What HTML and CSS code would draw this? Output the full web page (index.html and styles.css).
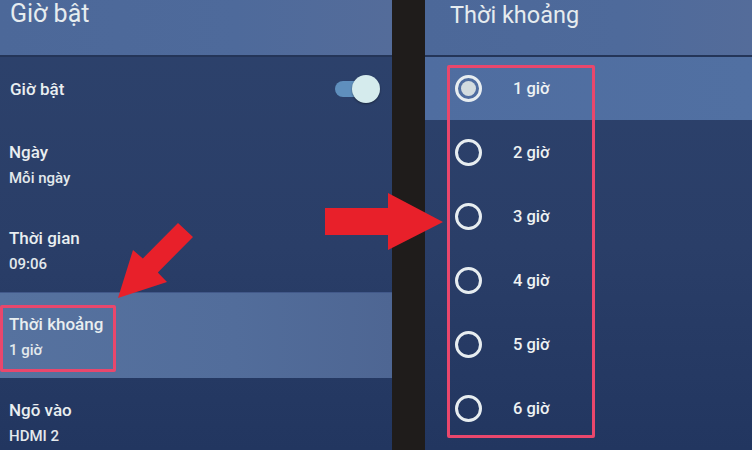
FILE: index.html
```html
<!DOCTYPE html>
<html lang="vi">
<head>
<meta charset="utf-8">
<title>Giờ bật</title>
<link rel="stylesheet" href="styles.css">
</head>
<body>
<div class="screen">
  <section class="panel panel-left">
    <header class="panel-head"><h1 class="title">Giờ bật</h1></header>
    <div class="toggle-row">
      <span class="label">Giờ bật</span>
      <span class="switch"><span class="track"></span><span class="thumb"></span></span>
    </div>
    <div class="item"><span class="label">Ngày</span><span class="sub">Mỗi ngày</span></div>
    <div class="item"><span class="label">Thời gian</span><span class="sub">09:06</span></div>
    <div class="item item-active">
      <span class="label">Thời khoảng</span><span class="sub">1 giờ</span>
      <span class="mark mark-left"></span>
    </div>
    <div class="item"><span class="label">Ngõ vào</span><span class="sub">HDMI 2</span></div>
  </section>
  <div class="divider"></div>
  <section class="panel panel-right">
    <header class="panel-head"><h1 class="title title-right">Thời khoảng</h1></header>
    <ul class="options">
      <li class="option option-selected"><span class="radio"></span><span class="opt-text">1 giờ</span></li>
      <li class="option"><span class="radio"></span><span class="opt-text">2 giờ</span></li>
      <li class="option"><span class="radio"></span><span class="opt-text">3 giờ</span></li>
      <li class="option"><span class="radio"></span><span class="opt-text">4 giờ</span></li>
      <li class="option"><span class="radio"></span><span class="opt-text">5 giờ</span></li>
      <li class="option"><span class="radio"></span><span class="opt-text">6 giờ</span></li>
    </ul>
    <span class="mark mark-right"></span>
  </section>
  <svg class="arrows" width="752" height="450" viewBox="0 0 752 450" aria-hidden="true">
    <polygon points="178,223 193,237 157.8,272.5 167,282 118,298 133,250 142.8,258.5" fill="#e8202a"/>
    <polygon points="325,208 388,208 388,193 443,222 388,250 388,235 325,235" fill="#e8202a"/>
  </svg>
</div>
</body>
</html>
```
FILE: styles.css
```css
* { box-sizing: border-box; }
html, body { margin: 0; padding: 0; }
body {
  width: 752px;
  height: 450px;
  overflow: hidden;
  background: #1e1c1c;
  font-family: Roboto, "Noto Sans", "Liberation Sans", sans-serif;
  color: #e9eef0;
}
.screen {
  position: relative;
  display: flex;
  width: 752px;
  height: 450px;
}
.panel {
  position: relative;
  display: flex;
  flex-direction: column;
  background: linear-gradient(180deg, #2d426c 0%, #2a3e68 55%, #223660 100%);
  overflow: hidden;
}
.panel-left { width: 392px; }
.divider { width: 33px; background: #1f1c1b; }
.panel-right { flex: 1; }
.panel-head {
  height: 57px;
  flex: none;
  background: linear-gradient(90deg, #4c6899 0%, #4e6a9b 60%, #546c9a 100%);
  border-bottom: 2px solid #243558;
  padding-left: 10px;
}
.title {
  margin: 0;
  font-size: 25px;
  font-weight: 400;
  line-height: 28px;
  color: #e6ecef;
}
.title-right { padding-left: 15px; font-size: 23.5px; line-height: 30px; }
.toggle-row {
  height: 63px;
  flex: none;
  display: flex;
  align-items: center;
  justify-content: space-between;
  padding: 0 12px 0 10px;
}
.label {
  display: block;
  font-size: 17px;
  font-weight: 500;
  line-height: 20px;
}
.sub {
  display: block;
  font-size: 15px;
  font-weight: 500;
  line-height: 20px;
  margin-top: 6px;
  color: #e3e9ec;
}
.switch {
  position: relative;
  display: block;
  width: 45px;
  height: 28px;
}
.track {
  position: absolute;
  left: 0;
  top: 6px;
  width: 34px;
  height: 16px;
  border-radius: 8px;
  background: #5f8fbd;
}
.thumb {
  position: absolute;
  right: 0;
  top: 0;
  width: 28px;
  height: 28px;
  border-radius: 50%;
  background: #d5ebed;
  box-shadow: 0 1px 2px rgba(0,0,0,0.4);
}
.item {
  position: relative;
  height: 86px;
  flex: none;
  padding: 22px 0 0 9px;
}
.item-active {
  background: linear-gradient(90deg, #56729f 0%, #526d9b 60%, #4e6693 100%);
  border-top: 1px solid #42598a;
  padding-top: 21px;
}
.mark {
  position: absolute;
  border: 3px solid #e9476c;
  border-radius: 2px;
}
.mark-left { left: 0; top: 12px; width: 116px; height: 67px; }
.mark-right { left: 22px; top: 65px; width: 148px; height: 373px; }
.options {
  list-style: none;
  margin: 0;
  padding: 0;
}
.option {
  height: 64px;
  display: flex;
  align-items: center;
  padding-left: 30px;
}
.option-selected {
  background: linear-gradient(90deg, #4f6da0 0%, #5170a2 100%);
  height: 63px;
}
.radio {
  width: 27px;
  height: 27px;
  border-radius: 50%;
  border: 3px solid #e7edf0;
  flex: none;
  display: flex;
  align-items: center;
  justify-content: center;
}
.option-selected .radio::after {
  content: "";
  width: 15px;
  height: 15px;
  border-radius: 50%;
  background: #d3dcdf;
}
.opt-text {
  margin-left: 31px;
  font-size: 16.5px;
  font-weight: 500;
  color: #eef2f3;
}
.arrows {
  position: absolute;
  left: 0;
  top: 0;
  pointer-events: none;
}
```
